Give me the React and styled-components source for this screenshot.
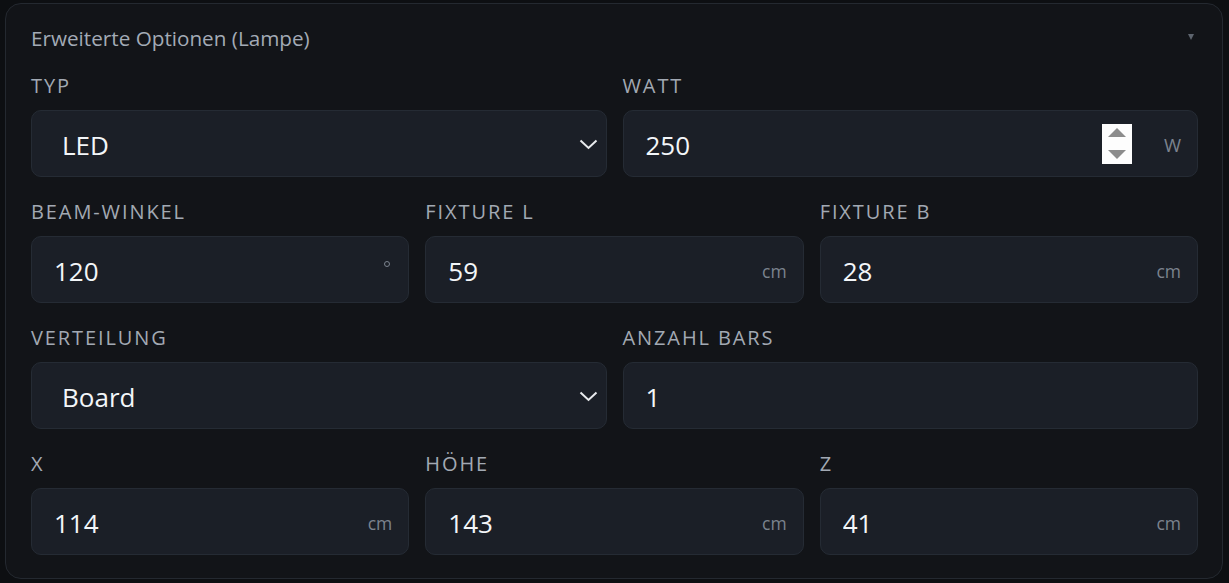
import React from 'react';
import styled, { createGlobalStyle } from 'styled-components';

const GlobalStyle = createGlobalStyle`
  html, body {
    margin: 0;
    padding: 0;
    background: #0d0f12;
  }
  body {
    font-family: 'Open Sans', 'Noto Sans', sans-serif;
  }
`;

const Page = styled.div`
  padding: 3px 6px 4px 5px;
`;

const Panel = styled.section`
  background: #121418;
  border: 1px solid #242930;
  border-radius: 16px;
  padding: 22px 24px 23px 25px;
`;

const Header = styled.div`
  display: flex;
  align-items: center;
  justify-content: space-between;
  height: 24px;
  margin-bottom: 24px;
`;

const Title = styled.span`
  font-size: 20.7px;
  line-height: 22px;
  color: #a3abb6;
`;

const Caret = styled.span`
  width: 0;
  height: 0;
  margin-right: 4px;
  margin-top: -2px;
  border-left: 3.5px solid transparent;
  border-right: 3.5px solid transparent;
  border-top: 6px solid #5d646e;
`;

const Row = styled.div`
  display: grid;
  grid-template-columns: repeat(${({ cols }) => cols}, 1fr);
  column-gap: 16px;
  & + & {
    margin-top: 23px;
  }
`;

const Field = styled.div`
  display: flex;
  flex-direction: column;
  min-width: 0;
`;

const Label = styled.label`
  font-size: 20px;
  line-height: 24px;
  letter-spacing: 1.9px;
  color: #a2a9b3;
  margin-bottom: 12px;
`;

const Box = styled.div`
  position: relative;
  display: flex;
  align-items: center;
  height: 67px;
  box-sizing: border-box;
  background: #1b1f27;
  border: 1px solid #252b34;
  border-radius: 10px;
  padding-right: 16px;
`;

const ValueInput = styled.input`
  flex: 1;
  min-width: 0;
  height: 100%;
  box-sizing: border-box;
  border: none;
  outline: none;
  background: transparent;
  padding: 2px 0 0 22px;
  font-family: 'Open Sans', 'Noto Sans', sans-serif;
  font-size: 26px;
  color: #f3f6f9;
`;

const Select = styled.select`
  appearance: none;
  flex: 1;
  height: 100%;
  border: none;
  outline: none;
  background: transparent;
  padding: 2px 0 0 30px;
  font-family: 'Open Sans', 'Noto Sans', sans-serif;
  font-size: 26px;
  color: #f3f6f9;
`;

const Chevron = styled.svg`
  position: absolute;
  right: 8px;
  top: 50%;
  margin-top: -5px;
  pointer-events: none;
`;

const Unit = styled.span`
  font-size: ${({ size }) => size || 17.5}px;
  color: #7b838e;
  margin-left: 8px;
  padding-top: 2px;
`;

const Degree = styled.span`
  width: 4px;
  height: 4px;
  border: 1px solid #7b838e;
  border-radius: 50%;
  margin-top: -12px;
  margin-right: 2px;
`;

const Spinner = styled.div`
  display: flex;
  flex-direction: column;
  align-items: center;
  justify-content: space-between;
  width: 30px;
  height: 40px;
  box-sizing: border-box;
  padding: 4px 0 5px;
  background: #fdfdfd;
  margin-right: 24px;
`;

const ChevronDown = () => (
  <Chevron width="19" height="11" viewBox="0 0 19 11">
    <path d="M1.5 1.5 L9.5 9 L17.5 1.5" fill="none" stroke="#e8eaed" strokeWidth="2" />
  </Chevron>
);

const SpinButtons = () => (
  <Spinner>
    <svg width="18" height="9" viewBox="0 0 18 9">
      <path d="M9 0 L18 9 L0 9 Z" fill="#8c8c8c" />
    </svg>
    <svg width="18" height="9" viewBox="0 0 18 9">
      <path d="M0 0 L18 0 L9 9 Z" fill="#8c8c8c" />
    </svg>
  </Spinner>
);

const SelectField = ({ label, value, options }) => (
  <Field>
    <Label>{label}</Label>
    <Box>
      <Select defaultValue={value}>
        {options.map((o) => (
          <option key={o}>{o}</option>
        ))}
      </Select>
      <ChevronDown />
    </Box>
  </Field>
);

const NumberField = ({ label, value, unit, spin }) => (
  <Field>
    <Label>{label}</Label>
    <Box>
      <ValueInput type="text" defaultValue={value} />
      {spin && <SpinButtons />}
      {unit === '°' && <Degree />}
      {unit && unit !== '°' && <Unit size={unit === 'W' ? 18.5 : 17.5}>{unit}</Unit>}
    </Box>
  </Field>
);

export default function App() {
  return (
    <>
      <GlobalStyle />
      <Page>
        <Panel>
          <Header>
            <Title>Erweiterte Optionen (Lampe)</Title>
            <Caret />
          </Header>
          <Row cols={2}>
            <SelectField label="TYP" value="LED" options={['LED', 'HPS', 'CMH']} />
            <NumberField label="WATT" value="250" unit="W" spin />
          </Row>
          <Row cols={3}>
            <NumberField label="BEAM-WINKEL" value="120" unit="°" />
            <NumberField label="FIXTURE L" value="59" unit="cm" />
            <NumberField label="FIXTURE B" value="28" unit="cm" />
          </Row>
          <Row cols={2}>
            <SelectField label="VERTEILUNG" value="Board" options={['Board', 'Bar', 'Spot']} />
            <NumberField label="ANZAHL BARS" value="1" />
          </Row>
          <Row cols={3}>
            <NumberField label="X" value="114" unit="cm" />
            <NumberField label="HÖHE" value="143" unit="cm" />
            <NumberField label="Z" value="41" unit="cm" />
          </Row>
        </Panel>
      </Page>
    </>
  );
}
